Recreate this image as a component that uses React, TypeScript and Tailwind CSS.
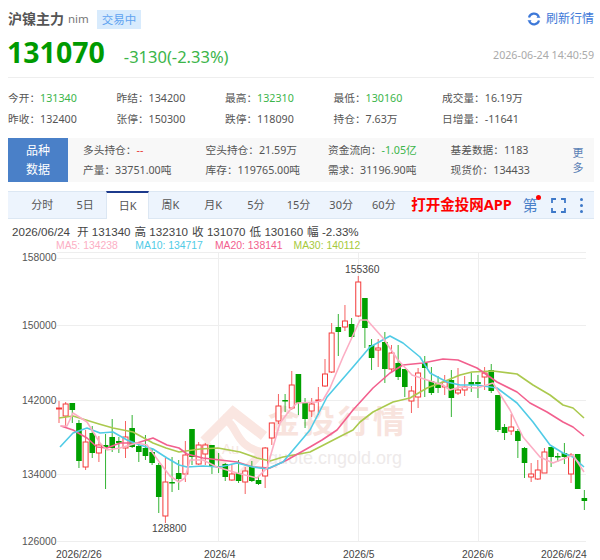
import React from 'react';

const cjk = { fontFamily: '"Noto Sans", "Noto Sans CJK SC", sans-serif' };
const arial = '"Liberation Sans", "Noto Sans CJK SC", sans-serif';

// [wickTop, bodyTop, bodyBottom, wickBottom, up]  (page pixel coordinates)
const candles: [number, number, number, number, number][] = [
  [401, 408, 409, 423, 1], [402, 404, 416, 427, 1], [403, 403, 410, 423, 0], [420, 423, 461, 468, 0],
  [430, 442, 467, 470, 1], [426, 433, 453, 458, 0], [436, 445, 453, 462, 1], [434, 445, 448, 489, 0],
  [419, 437, 448, 452, 0], [437, 441, 443, 453, 0], [421, 437, 448, 458, 1], [415, 428, 447, 448, 0],
  [443, 446, 452, 462, 0], [435, 448, 456, 460, 0], [448, 452, 463, 465, 0], [463, 465, 497, 513, 0],
  [458, 482, 516, 523, 1], [457, 482, 483, 492, 0], [460, 473, 479, 490, 0], [441, 455, 474, 482, 1],
  [429, 429, 457, 465, 0], [442, 445, 464, 465, 1], [443, 445, 454, 465, 1], [445, 445, 467, 474, 0],
  [453, 466, 467, 473, 0], [463, 464, 477, 481, 0], [465, 474, 480, 481, 1], [460, 473, 481, 483, 0],
  [467, 471, 482, 494, 1], [461, 467, 481, 482, 0], [477, 480, 484, 485, 0], [447, 448, 476, 488, 1],
  [423, 423, 438, 445, 1], [394, 406, 421, 424, 1], [394, 400, 401, 412, 0], [371, 385, 408, 410, 1],
  [374, 374, 403, 415, 0], [398, 403, 419, 428, 0], [398, 404, 411, 417, 1], [387, 400, 401, 415, 1],
  [359, 374, 386, 387, 1], [323, 333, 372, 373, 1], [314, 327, 332, 356, 0], [305, 321, 327, 331, 1],
  [318, 324, 337, 338, 0], [276, 282, 316, 317, 1], [298, 298, 328, 348, 0], [339, 345, 358, 370, 0],
  [339, 348, 350, 367, 1], [332, 342, 369, 383, 0], [345, 353, 369, 372, 1], [345, 363, 377, 380, 0],
  [369, 369, 387, 397, 0], [386, 391, 401, 413, 1], [368, 373, 397, 408, 1], [356, 363, 368, 397, 0],
  [367, 381, 393, 395, 0], [376, 383, 388, 393, 0], [375, 382, 387, 395, 1], [370, 380, 398, 417, 0],
  [368, 390, 393, 395, 1], [376, 387, 390, 396, 1], [373, 382, 385, 392, 0], [375, 382, 384, 398, 0],
  [367, 373, 377, 390, 1], [364, 370, 391, 393, 0], [395, 395, 430, 432, 0], [424, 427, 433, 440, 0],
  [414, 427, 431, 435, 1], [429, 431, 441, 458, 0], [447, 448, 463, 478, 0], [463, 474, 477, 482, 1],
  [460, 470, 479, 480, 1], [448, 452, 473, 473, 1], [447, 447, 457, 467, 0], [453, 456, 457, 462, 0],
  [443, 453, 457, 464, 0], [453, 455, 474, 483, 1], [454, 454, 489, 489, 0], [490, 498, 501, 510, 0],
];

const ma5 = '60,426 67,426 73,413 87,422 100,443 107,450 120,448 137,443 147,445 160,463 170,476 179,482 185,478 190,460 203,460 217,467 237,473 257,478 267,468 280,423 290,410 297,403 317,402 323,400 330,388 343,357 360,320 367,320 383,338 398,360 412,375 427,380 443,385 450,390 460,387 477,388 493,383 510,410 523,437 540,457 553,463 573,455 584,472';
const ma10 = '60,447 73,433 87,428 100,433 113,432 127,440 140,445 153,449 167,458 179,465 187,467 203,466 220,467 237,463 253,467 267,469 283,462 310,430 327,397 353,367 370,347 390,336 403,343 420,357 430,373 447,382 460,385 477,385 497,388 517,403 533,422 550,445 563,453 573,457 584,467';
const ma20 = '61,426 73,430 87,438 97,447 107,448 120,443 137,443 153,438 167,445 179,448 187,454 203,458 220,460 237,462 253,467 270,468 287,460 310,447 322,440 337,430 353,410 373,388 390,373 403,365 423,363 443,359 458,360 477,368 497,382 517,392 530,403 547,412 563,422 573,427 584,436';
const ma30 = '59,418 73,416 86,420 99,424 113,428 133,432 153,443 166,448 179,452 200,449 218,448 240,452 257,458 270,461 283,457 310,452 343,435 353,430 360,422 373,412 393,402 410,398 427,388 443,382 460,375 472,372 493,371 517,374 533,385 550,395 563,405 573,408 584,418';

const stats = [
  ['今开：', '131340', 'text-[#3cb54a]'], ['昨结：', '134200', ''], ['最高：', '132310', 'text-[#3cb54a]'], ['最低：', '130160', 'text-[#3cb54a]'], ['成交量：', '16.19万', ''],
  ['昨收：', '132400', ''], ['张停：', '150300', ''], ['跌停：', '118090', ''], ['持仓：', '7.63万', ''], ['日增量：', '-11641', ''],
];

const product = [
  ['多头持仓：', '--', 'text-[#e83a3a]'], ['空头持仓：', '21.59万', ''], ['资金流向：', '-1.05亿', 'text-[#3cb54a]'], ['基差数据：', '1183', ''],
  ['产量：', '33751.00吨', ''], ['库存：', '119765.00吨', ''], ['需求：', '31196.90吨', ''], ['现货价：', '134433', ''],
];

const tabs = ['分时', '5日', '日K', '周K', '月K', '5分', '15分', '30分', '60分'];

const Chart = () => {
  const grid = [258, 325, 400, 474, 541];
  return (
    <svg viewBox="0 252 600 308" className="block h-[308px] w-[600px]" fontFamily={arial} fontSize="10.3" fill="#444">
      {grid.map((y) => (
        <line key={y} x1="57" x2="586" y1={y + 0.5} y2={y + 0.5} stroke="#eeeeee" />
      ))}
      {[218, 358, 478].map((x) => (
        <line key={x} x1={x + 0.5} x2={x + 0.5} y1="252" y2="541" stroke="#eeeeee" />
      ))}
      <line x1="57" x2="586" y1="252.5" y2="252.5" stroke="#eeeeee" />

      {/* watermark */}
      <g fill="none" stroke="#fae6e1">
        <path d="M204 441 L233 412 L264 436" strokeWidth="10" />
        <path d="M222 418 C240 425 232 445 262 452 L240 476" strokeWidth="8" />
        <path d="M205 442 L228 470" strokeWidth="7" />
      </g>
      <text x="222" y="454" fontSize="14" fill="#f6e6e2">Au</text>
      <text x="268" y="433" fontSize="32" letterSpacing="3" fontWeight="700" fill="#f8e3dd">金投行情</text>
      <text x="402" y="464" textAnchor="end" fontSize="18" fill="#eeeaea">quote.cngold.org</text>

      {candles.map(([wt, bt, bb, wb, up], i) => {
        const x = 59 + i * 6.65;
        const c = up ? '#f43a3a' : '#00a000';
        const flat = bb - bt < 2;
        return (
          <g key={i}>
            <line x1={x} x2={x} y1={wt} y2={wb} stroke={c} strokeWidth="1" strokeOpacity="0.8" />
            {up ? (
              <rect x={x - 2.5} y={bt} width="5" height={Math.max(bb - bt, 1)} fill={flat ? c : '#fff'} stroke={c} strokeWidth="1" />
            ) : (
              <rect x={x - 2.8} y={bt} width="5.6" height={Math.max(bb - bt, 1.5)} fill={c} />
            )}
          </g>
        );
      })}

      <polyline points={ma30} fill="none" stroke="#abc94e" strokeWidth="1.6" strokeLinejoin="round" />
      <polyline points={ma20} fill="none" stroke="#f2608e" strokeWidth="1.6" strokeLinejoin="round" />
      <polyline points={ma10} fill="none" stroke="#50cbe6" strokeWidth="1.6" strokeLinejoin="round" />
      <polyline points={ma5} fill="none" stroke="#fcaec4" strokeWidth="1.6" strokeLinejoin="round" />

      {[['158000', 261], ['150000', 329], ['142000', 404], ['134000', 478], ['126000', 545]].map(([t, y]) => (
        <text key={t} x="22" y={y} fill="#555">{t}</text>
      ))}
      <text x="345" y="273">155360</text>
      <text x="152" y="532">128800</text>
      <text x="56" y="558">2026/2/26</text>
      <text x="204" y="558">2026/4</text>
      <text x="343" y="558">2026/5</text>
      <text x="462" y="558">2026/6</text>
      <text x="541" y="558">2026/6/24</text>
    </svg>
  );
};

export default function App() {
  return (
    <div className="h-[560px] w-[600px] overflow-hidden bg-white text-[#555]" style={cjk}>
      <div className="ml-2 mr-1.5">
        {/* title row */}
        <div className="flex h-[30px] items-end justify-between">
          <div className="flex items-center pb-[1px]">
            <span className="text-[14px] font-bold leading-5 text-[#555]">沪镍主力</span>
            <span className="ml-1 text-[11.5px] leading-5 text-[#777]">nim</span>
            <span className="ml-2 bg-[#d8ebfd] px-[5px] text-[11.5px] leading-[19px] text-[#5da2f0]">交易中</span>
          </div>
          <div className="flex items-center gap-[5px] pb-[1px] text-[#3d78d8]">
            <svg width="14" height="14" viewBox="0 0 14 14" fill="none" stroke="#3d78d8" strokeWidth="2.2">
              <path d="M2 5.5A5.2 5.2 0 0 1 11.5 4.2" />
              <path d="M12 8.5A5.2 5.2 0 0 1 2.5 9.8" />
              <path d="M9.5 5.8h4L11.5 2.8zM4.5 8.2h-4l2 3z" fill="#3d78d8" stroke="none" />
            </svg>
            <span className="text-[12px] leading-5">刷新行情</span>
          </div>
        </div>
        {/* price row */}
        <div className="flex h-[48px] items-center justify-between border-b border-[#eeeeee]">
          <div className="flex items-baseline">
            <span className="ml-[-1px] text-[28.5px] font-bold leading-none text-[#009a00]">131070</span>
            <span className="ml-[19px] text-[16.5px] text-[#3cb54a]">-3130(-2.33%)</span>
          </div>
          <span className="mt-1 text-[10.7px] text-[#aaaaaa]">2026-06-24 14:40:59</span>
        </div>
        {/* quote stats */}
        <div className="mt-[10px] grid grid-cols-[108.5px_108.5px_108.5px_108.5px_1fr] text-[10.7px] leading-[21px]">
          {stats.map(([k, v, c]) => (
            <div key={k} className="whitespace-nowrap">
              {k}
              <span className={c}>{v}</span>
            </div>
          ))}
        </div>
        {/* product data */}
        <div className="mt-[8px] flex h-[44px] bg-[#f8f8f8]">
          <div className="flex w-[60px] shrink-0 items-center justify-center bg-[#4a80c8] text-center text-[12px] leading-[19px] text-white">
            品种
            <br />
            数据
          </div>
          <div className="ml-[15px] grid flex-1 grid-cols-[122.5px_122.5px_122.5px_1fr] content-center text-[10.7px] leading-[20px]">
            {product.map(([k, v, c]) => (
              <div key={k} className="whitespace-nowrap">
                {k}
                <span className={c}>{v}</span>
              </div>
            ))}
          </div>
          <div className="mr-[10px] flex w-[12px] shrink-0 items-center text-center text-[11px] leading-[15px] text-[#5a7fb5]">更多</div>
        </div>
        {/* tabs */}
        <div className="mt-[9px] flex h-[28px] items-stretch border-y border-[#dce7f3] bg-[#edf4fd] pl-[13px] text-[11px]">
          {tabs.map((t) => (
            <div
              key={t}
              className={
                t === '日K'
                  ? 'mt-[-1px] mb-[-1px] flex w-[42.7px] items-center justify-center border-x border-t-2 border-x-[#dce7f3] border-t-[#1c3a8c] bg-white'
                  : 'flex w-[42.7px] items-center justify-center'
              }
            >
              {t}
            </div>
          ))}
          <span className="ml-[6px] self-center whitespace-nowrap text-[14.5px] font-bold text-[#f00]">打开金投网APP</span>
          <div className="relative ml-[11px] self-center text-[15px] leading-5 text-[#4a80c8]">
            第<span className="absolute right-[-3px] top-[0px] h-[5px] w-[5px] rounded-full bg-[#f00]" />
          </div>
          <svg className="ml-[13px] self-center" width="15" height="15" viewBox="0 0 15 15" fill="none" stroke="#3d78c8" strokeWidth="1.8">
            <path d="M1 5V1h4M10 1h4v4M14 10v4h-4M5 14H1v-4" />
          </svg>
          <div className="ml-[14px] flex flex-col gap-[3px] self-center">
            <span className="h-[3px] w-[3px] rounded-full bg-[#3d78c8]" />
            <span className="h-[3px] w-[3px] rounded-full bg-[#3d78c8]" />
            <span className="h-[3px] w-[3px] rounded-full bg-[#3d78c8]" />
          </div>
        </div>
      </div>
      {/* day info */}
      <div className="ml-3 mt-[6px] flex gap-[4px] whitespace-nowrap text-[11.6px] leading-[14px] text-[#444]" style={{ fontFamily: arial }}>
        <span className="mr-[3px]">2026/06/24</span>
        <span>开 131340</span>
        <span>高 132310</span>
        <span>收 131070</span>
        <span>低 130160</span>
        <span>幅 -2.33%</span>
      </div>
      <div className="ml-[56px] flex whitespace-nowrap text-[10.4px] leading-[13px]" style={{ fontFamily: arial }}>
        <span className="text-[#fcaec4]">MA5: 134238</span>
        <span className="ml-[17.5px] text-[#50cbe6]">MA10: 134717</span>
        <span className="ml-[12px] text-[#f2608e]">MA20: 138141</span>
        <span className="ml-[11px] text-[#a6c93c]">MA30: 140112</span>
      </div>
      <Chart />
    </div>
  );
}
